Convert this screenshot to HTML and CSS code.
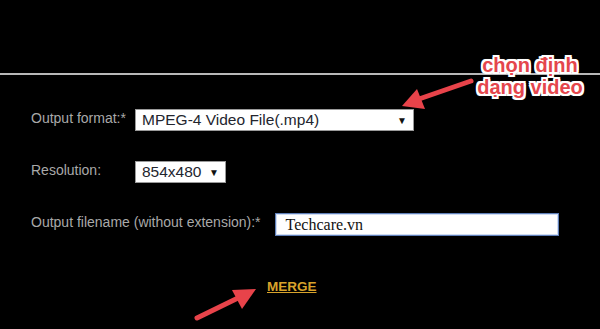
FILE: index.html
```html
<!DOCTYPE html>
<html lang="en">
<head>
    <meta charset="UTF-8">
    <meta name="viewport" content="width=device-width, initial-scale=1.0">
    <title>Merge Videos</title>
    <link rel="stylesheet" href="styles.css">
</head>
<body>
    <div class="page">
        <div class="divider"></div>
        <form class="options">
            <div class="field">
                <label>Output format:*</label>
                <div class="picker picker-format">
                    <span>MPEG-4 Video File(.mp4)</span>
                    <span class="caret">&#9660;</span>
                </div>
            </div>
            <div class="field">
                <label>Resolution:</label>
                <div class="picker picker-res">
                    <span>854x480</span>
                    <span class="caret">&#9660;</span>
                </div>
            </div>
            <div class="field field-wide">
                <label>Output filename (without extension):*</label>
                <div class="textbox">Techcare.vn</div>
            </div>
            <a class="merge" href="#">MERGE</a>
        </form>

        <div class="callout">chọn định<br>dạng video</div>
        <svg class="marks" width="600" height="329" viewBox="0 0 600 329">
            <line x1="471" y1="81" x2="419" y2="99" />
            <polygon points="402,106 425,109 417,89" />
            <line x1="197" y1="318" x2="238" y2="298" />
            <polygon points="256,289 242,309 232,290" />
        </svg>
    </div>
</body>
</html>
```

FILE: styles.css
```css
body {
    margin: 0;
    background: #000;
    font-family: "Liberation Sans", Arial, sans-serif;
    overflow: hidden;
}
.page {
    position: relative;
    width: 600px;
    height: 329px;
}
.divider {
    height: 73px;
    border-bottom: 2px solid #b8b8b8;
}
.options {
    display: flex;
    flex-direction: column;
    gap: 30px;
    padding: 34px 0 0 31px;
}
.field {
    display: flex;
    align-items: center;
    height: 22px;
}
.field label {
    width: 104px;
    flex: none;
    margin-bottom: 5px;
    color: #a9a9a9;
    font-size: 14px;
}
.field-wide label {
    width: auto;
    margin-right: 14px;
}
.picker {
    box-sizing: border-box;
    height: 22px;
    display: flex;
    align-items: center;
    justify-content: space-between;
    padding: 0 6px;
    background: #fff;
    border: 1px solid #9a9a9a;
    color: #23252e;
    font-size: 15.5px;
}
.picker-format {
    width: 279px;
}
.picker-res {
    width: 91px;
}
.caret {
    font-size: 10px;
    color: #111;
}
.textbox {
    box-sizing: border-box;
    width: 284px;
    height: 23px;
    padding-left: 10px;
    line-height: 21px;
    background: #fff;
    border: 1px solid #5f7fb8;
    box-shadow: inset 0 0 0 1px #cfdcf2;
    color: #111;
    font-family: "Liberation Serif", "Times New Roman", serif;
    font-size: 16px;
}
.merge {
    align-self: flex-start;
    margin: 14px 0 0 236px;
    color: #d8a32b;
    font-size: 13.5px;
    font-weight: bold;
}
.callout {
    position: absolute;
    left: 469px;
    top: 54px;
    width: 122px;
    text-align: center;
    color: #e4464c;
    font-size: 20px;
    font-weight: bold;
    line-height: 22px;
    text-shadow: 0 0 3px #fff, 2px 2px 0 #fff, -2px -2px 0 #fff, 2px -2px 0 #fff, -2px 2px 0 #fff, 2px 0 0 #fff, -2px 0 0 #fff, 0 2px 0 #fff, 0 -2px 0 #fff;
}
.marks {
    position: absolute;
    left: 0;
    top: 0;
    pointer-events: none;
}
.marks line {
    stroke: #e8434a;
    stroke-width: 5;
    stroke-linecap: round;
}
.marks polygon {
    fill: #e8434a;
}
```
